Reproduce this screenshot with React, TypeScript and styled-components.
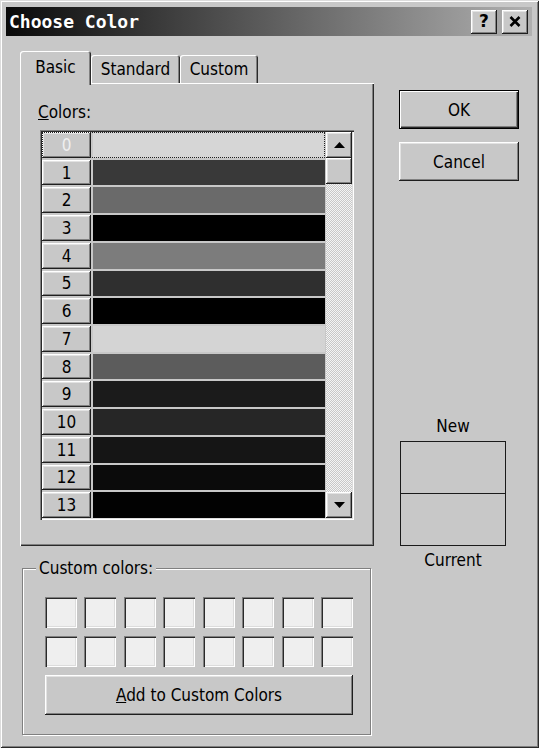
import React from "react";
import styled, { createGlobalStyle, css } from "styled-components";

const BG = "#c8c8c8";
const UI = `"DejaVu Sans Condensed", "DejaVu Sans", sans-serif`;

const GlobalStyle = createGlobalStyle`
  html, body { margin: 0; padding: 0; background: ${BG}; }
  * { box-sizing: border-box; }
`;

const raised = css`
  box-shadow: inset -1px -1px 0 #1e1e1e, inset 1px 1px 0 #ffffff,
    inset -2px -2px 0 #808080, inset 2px 2px 0 #e2e2e2;
`;

const sunken = css`
  box-shadow: inset 1px 1px 0 #808080, inset 2px 2px 0 #2a2a2a,
    inset -1px -1px 0 #ffffff, inset -2px -2px 0 #dcdcdc;
`;

const Window = styled.div`
  width: 539px;
  height: 748px;
  background: ${BG};
  padding: 7px 7px 0 6px;
  box-shadow: inset 1px 1px 0 #dcdcdc, inset -1px -1px 0 #2a2a2a,
    inset 2px 2px 0 #ffffff, inset -2px -2px 0 #808080;
  display: flex;
  flex-direction: column;
  font-family: ${UI};
  font-size: 17px;
  color: #000;
`;

const TitleBar = styled.div`
  height: 29px;
  display: flex;
  align-items: center;
  padding: 0 4px 0 3px;
  background: linear-gradient(90deg, #0a0a0a 0%, #3c3c3c 30%, #b0b0b0 100%);
`;

const TitleText = styled.div`
  flex: 1;
  color: #ffffff;
  font-family: "DejaVu Sans Mono", "Liberation Mono", monospace;
  font-weight: bold;
  font-size: 18px;
  line-height: 20px;
`;

const TitleButton = styled.div`
  width: 26px;
  height: 24px;
  margin-left: 5px;
  background: ${BG};
  ${raised};
  display: flex;
  align-items: center;
  justify-content: center;
  font-family: "DejaVu Sans", sans-serif;
  font-weight: bold;
  font-size: 17px;
  line-height: 1;
  padding-bottom: 1px;
`;

const Body = styled.div`
  display: flex;
  margin-top: 15px;
  padding-left: 14px;
`;

const LeftCol = styled.div`
  width: 354px;
  display: flex;
  flex-direction: column;
`;

const TabStrip = styled.div`
  display: flex;
  align-items: flex-end;
  height: 32px;
`;

const Tab = styled.div<{ $active?: boolean; $w: number }>`
  width: ${(p) => p.$w}px;
  height: ${(p) => (p.$active ? 34 : 28)}px;
  margin-bottom: ${(p) => (p.$active ? -2 : 0)}px;
  position: relative;
  z-index: ${(p) => (p.$active ? 1 : 0)};
  background: ${BG};
  border-radius: 3px 3px 0 0;
  box-shadow: inset 1px 1px 0 #ffffff, inset -1px 0 0 #2a2a2a,
    inset -2px 0 0 #808080;
  display: flex;
  align-items: ${(p) => (p.$active ? "flex-start" : "center")};
  padding-top: ${(p) => (p.$active ? 6 : 0)}px;
  justify-content: center;
`;

const Panel = styled.div`
  height: 463px;
  width: 354px;
  background: ${BG};
  box-shadow: inset 1px 1px 0 #ffffff, inset -1px -1px 0 #2a2a2a,
    inset -2px -2px 0 #808080;
  padding: 19px 20px 26px 18px;
  display: flex;
  flex-direction: column;
`;

const FieldLabel = styled.div`
  line-height: 20px;
  height: 20px;
  margin-bottom: 8px;
`;

const ListBox = styled.div`
  width: 314px;
  height: 390px;
  margin-left: 2px;
  padding: 2px;
  background: ${BG};
  ${sunken};
  display: grid;
  grid-template-columns: 1fr 26px;
`;

const Rows = styled.div`
  display: grid;
  grid-template-rows: repeat(14, 1fr);
  row-gap: 2px;
  padding-right: 1px;
`;

const Row = styled.div<{ $selected?: boolean }>`
  position: relative;
  display: grid;
  grid-template-columns: 49px 1fr;
  column-gap: 2px;
  ${(p) =>
    p.$selected &&
    css`
      &::after {
        content: "";
        position: absolute;
        inset: 0;
        border: 1px dotted #202020;
        pointer-events: none;
      }
    `}
`;

const RowLabel = styled.div<{ $selected?: boolean }>`
  background: ${BG};
  ${raised};
  display: flex;
  align-items: center;
  justify-content: center;
  color: ${(p) => (p.$selected ? "#efefef" : "#000")};
`;

const ColorBar = styled.div`
  background: ${(p: { $c: string }) => p.$c};
`;

const ScrollBar = styled.div`
  display: flex;
  flex-direction: column;
`;

const ScrollButton = styled.div`
  height: 26px;
  background: ${BG};
  ${raised};
  display: flex;
  align-items: center;
  justify-content: center;
`;

const Track = styled.div`
  flex: 1;
  background-color: #f2f2f2;
  background-image: repeating-conic-gradient(#c8c8c8 0 25%, #f4f4f4 0 50%);
  background-size: 2px 2px;
`;

const RightCol = styled.div`
  margin-left: 25px;
  width: 120px;
  padding-top: 39px;
  display: flex;
  flex-direction: column;
`;

const Button = styled.div<{ $default?: boolean; $w?: number }>`
  height: ${(p) => (p.$default ? 39 : 39)}px;
  width: ${(p) => p.$w ?? 120}px;
  background: ${BG};
  display: flex;
  align-items: center;
  justify-content: center;
  ${(p) =>
    p.$default
      ? css`
          border: 1px solid #000;
          box-shadow: inset 1px 1px 0 #ffffff, inset -1px -1px 0 #2a2a2a,
            inset -2px -2px 0 #808080;
        `
      : raised};
`;

const CancelButton = styled(Button)`
  margin-top: 13px;
`;

const Preview = styled.div`
  margin-top: 235px;
  margin-left: 1px;
  width: 106px;
  display: flex;
  flex-direction: column;
  align-items: center;
`;

const PreviewLabel = styled.div`
  line-height: 20px;
  height: 20px;
`;

const PreviewBox = styled.div`
  margin: 5px 0 4px;
  width: 106px;
  border: 1px solid #1a1a1a;
  display: flex;
  flex-direction: column;
`;

const PreviewHalf = styled.div<{ $lower?: boolean }>`
  height: ${(p) => (p.$lower ? 52 : 51)}px;
  background: ${BG};
  border-top: ${(p) => (p.$lower ? "1px solid #1a1a1a" : "none")};
`;

const Group = styled.div`
  position: relative;
  margin-top: 22px;
  margin-left: 2px;
  width: 349px;
  height: 167px;
  border: 1px solid #808080;
  box-shadow: inset 1px 1px 0 #ffffff, 1px 1px 0 #ffffff;
  padding: 28px 0 19px 22px;
  display: flex;
  flex-direction: column;
`;

const Legend = styled.div`
  position: absolute;
  top: -11px;
  left: 13px;
  padding: 0 3px;
  line-height: 20px;
  background: ${BG};
`;

const SwatchGrid = styled.div`
  width: 308px;
  display: grid;
  grid-template-columns: repeat(8, 32px);
  grid-auto-rows: 31px;
  justify-content: space-between;
  row-gap: 8px;
  margin-bottom: 8px;
`;

const Swatch = styled.div`
  background: #efefef;
  ${sunken};
`;

const Arrow = ({ up }: { up?: boolean }) => (
  <svg width="11" height="6" viewBox="0 0 11 6">
    <polygon points={up ? "5.5,0 11,6 0,6" : "0,0 11,0 5.5,6"} fill="#000" />
  </svg>
);

const colors = [
  "#d6d6d6",
  "#393939",
  "#6a6a6a",
  "#000000",
  "#7c7c7c",
  "#2f2f2f",
  "#000000",
  "#d4d4d4",
  "#5c5c5c",
  "#1b1b1b",
  "#262626",
  "#151515",
  "#0b0b0b",
  "#020202",
];

export default function App() {
  return (
    <>
      <GlobalStyle />
      <Window>
        <TitleBar>
          <TitleText>Choose Color</TitleText>
          <TitleButton>?</TitleButton>
          <TitleButton>
            <svg width="12" height="11" viewBox="0 0 12 11">
              <path d="M1.5 1 L10.5 10 M10.5 1 L1.5 10" stroke="#000" strokeWidth="2.6" />
            </svg>
          </TitleButton>
        </TitleBar>
        <Body>
          <LeftCol>
            <TabStrip>
              <Tab $active $w={71}>Basic</Tab>
              <Tab $w={89}>Standard</Tab>
              <Tab $w={78}>Custom</Tab>
            </TabStrip>
            <Panel>
              <FieldLabel>
                <u>C</u>olors:
              </FieldLabel>
              <ListBox>
                <Rows>
                  {colors.map((c, i) => (
                    <Row key={i} $selected={i === 0}>
                      <RowLabel $selected={i === 0}>{i}</RowLabel>
                      <ColorBar $c={c} />
                    </Row>
                  ))}
                </Rows>
                <ScrollBar>
                  <ScrollButton>
                    <Arrow up />
                  </ScrollButton>
                  <ScrollButton />
                  <Track />
                  <ScrollButton>
                    <Arrow />
                  </ScrollButton>
                </ScrollBar>
              </ListBox>
            </Panel>
            <Group>
              <Legend>Custom colors:</Legend>
              <SwatchGrid>
                {Array.from({ length: 16 }).map((_, i) => (
                  <Swatch key={i} />
                ))}
              </SwatchGrid>
              <Button $w={308} style={{ height: 40 }}>
                <span>
                  <u>A</u>dd to Custom Colors
                </span>
              </Button>
            </Group>
          </LeftCol>
          <RightCol>
            <Button $default>OK</Button>
            <CancelButton>Cancel</CancelButton>
            <Preview>
              <PreviewLabel>New</PreviewLabel>
              <PreviewBox>
                <PreviewHalf />
                <PreviewHalf $lower />
              </PreviewBox>
              <PreviewLabel>Current</PreviewLabel>
            </Preview>
          </RightCol>
        </Body>
      </Window>
    </>
  );
}
